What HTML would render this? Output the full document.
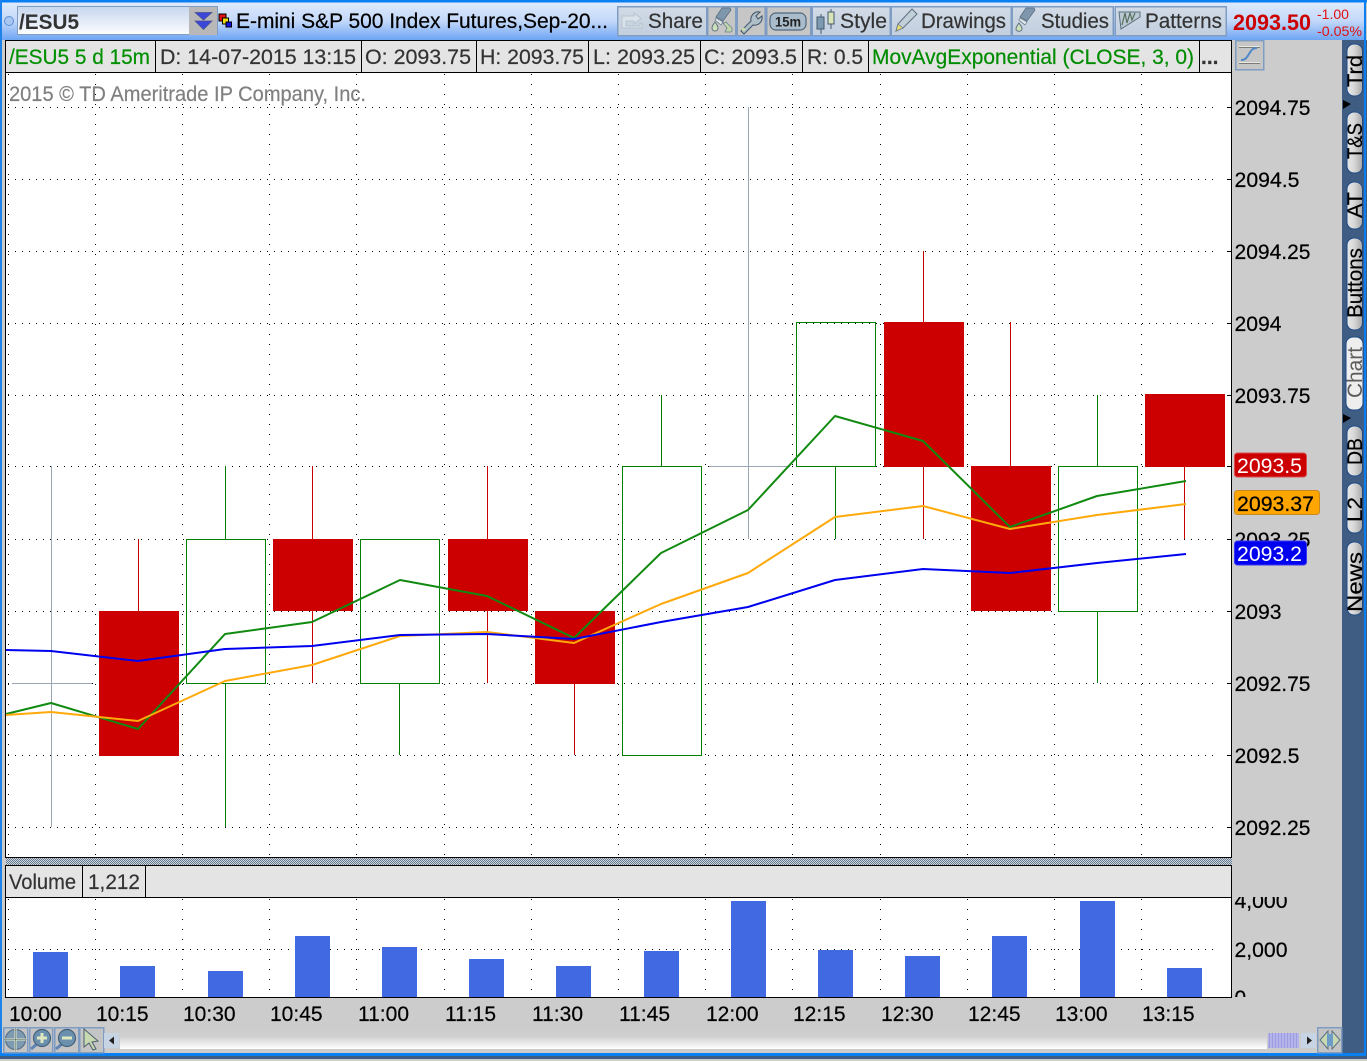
<!DOCTYPE html>
<html>
<head>
<meta charset="utf-8">
<title>/ESU5 Chart</title>
<style>
html,body{margin:0;padding:0;background:#ccc;overflow:hidden}
svg{display:block;position:absolute;left:0;top:0}
text{font-family:"Liberation Sans",sans-serif;font-size:21px;white-space:pre}
.g line{stroke:#000;stroke-width:1;shape-rendering:crispEdges}
.h{stroke-dasharray:1 6}
.v{stroke-dasharray:1 9}
.c{shape-rendering:crispEdges}
.t{fill:#333;stroke:#333;stroke-width:.2}
.ax{fill:#000;stroke:#000;stroke-width:.2}
.btn{stroke:#7f9cc2;stroke-width:1.5;shape-rendering:crispEdges}
.tab{stroke:#1c4a86;stroke-width:1}
</style>
</head>
<body>
<svg width="1367" height="1061" viewBox="0 0 1367 1061" xmlns="http://www.w3.org/2000/svg">
<defs>
<linearGradient id="tb" x1="0" y1="0" x2="0" y2="1"><stop offset="0" stop-color="#dfeafc"/><stop offset=".5" stop-color="#c3d8f9"/><stop offset="1" stop-color="#6fa5f4"/></linearGradient>
<linearGradient id="inp" x1="0" y1="0" x2="0" y2="1"><stop offset="0" stop-color="#c6d6ee"/><stop offset="1" stop-color="#fcfdff"/></linearGradient>
<linearGradient id="bt" x1="0" y1="0" x2="0" y2="1"><stop offset="0" stop-color="#d2dbe6"/><stop offset="1" stop-color="#c2cfdf"/></linearGradient>
<linearGradient id="track" x1="0" y1="0" x2="0" y2="1"><stop offset="0" stop-color="#cccccc"/><stop offset=".35" stop-color="#cfcfcf"/><stop offset="1" stop-color="#ffffff"/></linearGradient>
<linearGradient id="tabg" x1="0" y1="0" x2="1" y2="0"><stop offset="0" stop-color="#e8e8e8"/><stop offset=".45" stop-color="#d8d8d8"/><stop offset="1" stop-color="#a8a8a8"/></linearGradient>
<pattern id="hatch" width="2" height="2" patternUnits="userSpaceOnUse"><rect width="2" height="2" fill="#d4d9de"/><rect width="1" height="1" fill="#5f7890"/><rect x="1" y="1" width="1" height="1" fill="#5f7890"/></pattern>
<pattern id="thumb" width="3" height="3" patternUnits="userSpaceOnUse"><rect width="3" height="3" fill="#b4b4ea"/><rect width="1" height="3" fill="#9c9ce0"/></pattern>
<clipPath id="volaxis"><rect x="1232" y="897" width="110" height="100"/></clipPath>
</defs>

<!-- window -->
<rect width="1367" height="1061" fill="#cccccc"/>
<rect x="0" y="2" width="1365" height="38" fill="url(#tb)"/>
<rect x="0" y="0" width="1367" height="2.5" fill="#0a7ff2"/>
<rect x="0" y="0" width="2" height="1056" fill="#1f82ea"/>
<rect x="1342" y="40" width="25" height="1019" fill="#3f5c83"/>
<rect x="1364" y="2" width="2" height="1053" fill="#0a7ff2"/>
<rect x="0" y="1053" width="1366" height="3" fill="#0a7ff2"/>
<rect x="0" y="1056" width="1366" height="3" fill="#3f5c83"/>

<!-- top toolbar -->
<circle cx="9" cy="21" r="4.5" fill="#a9c6f0" stroke="#5f90d8"/>
<rect x="17.500" y="6.500" width="200" height="28" fill="url(#inp)" stroke="#7f9cc2"/>
<rect x="189" y="7" width="28" height="28" fill="#b8b8b8"/>
<path d="M195 12.500h17l-8.500 7.500zM195 21h17l-8.500 8.500z" fill="#3c46d8" stroke="#47508c" stroke-width=".7"/>
<text x="19" y="29" style="fill:#333;font-weight:bold" textLength="60" lengthAdjust="spacingAndGlyphs">/ESU5</text>
<g class="c"><rect x="219" y="14" width="7" height="7" fill="#e01010" stroke="#000"/><rect x="222.500" y="18" width="6" height="6" fill="#f0e010" stroke="#000"/><rect x="226" y="22" width="5.500" height="5" fill="#1010e0" stroke="#000"/></g>
<text x="236" y="28" fill="#000" stroke="#000" stroke-width=".2" textLength="372" lengthAdjust="spacing">E-mini S&amp;P 500 Index Futures,Sep-20...</text>

<g fill="url(#bt)" class="btn">
<rect x="617.500" y="6.500" width="89" height="29"/>
<rect x="707.500" y="6.500" width="28" height="29" fill="#c6c6c6"/>
<rect x="737" y="6.500" width="28" height="29" fill="#c6c6c6"/>
<rect x="766.500" y="6.500" width="44" height="29" fill="#c6c6c6"/>
<rect x="812" y="6.500" width="78" height="29"/>
<rect x="891" y="6.500" width="120" height="29"/>
<rect x="1012" y="6.500" width="101" height="29"/>
<rect x="1115" y="6.500" width="111" height="29"/>
</g>
<!-- share icon -->
<path d="M622 16h12v-3l7 5.500-7 5.500v-3h-8v5h14v-3h2v5h-20z" fill="#dbe3ea" stroke="#b7c3cf"/>
<text x="648" y="28" class="t" textLength="55" lengthAdjust="spacingAndGlyphs">Share</text>
<!-- style painter icon -->
<path d="M716 17l6-9h8l1 2-8 11z" fill="#7f97ad" stroke="#586c80" stroke-width=".8"/>
<path d="M716 18l7 4-2 3-6-5z" fill="#dfe8e8" stroke="#586c80" stroke-width=".6"/>
<path d="M715 22c-2 3-3 4-3 6 0 4 6 4 6 0 0-2-1-3-3-6z" fill="#cfe0bd" stroke="#5f7480"/>
<path d="M722 22l2 1 2-1 6 6v3l-1 1h-6l2-4z" fill="#bfd4a8" stroke="#6d8292" stroke-width=".8"/>
<!-- wrench -->
<path d="M741 31l10-10c-1-5 3-10 9-9l-4 4 2 3 4-3c1 6-4 10-9 9l-9 9z" fill="#aebfc9" stroke="#44596e" stroke-width="1.100"/>
<circle cx="743.500" cy="29.500" r="1.800" fill="#c8d8a8"/>
<!-- 15m -->
<rect x="770" y="13" width="36" height="17" rx="6" fill="#a8bccb" stroke="#52687c" stroke-width="1.200"/>
<text x="775" y="26.500" style="font-size:14px;font-weight:bold;fill:#222" textLength="26" lengthAdjust="spacingAndGlyphs">15m</text>
<!-- style candles -->
<path d="M821 14v20M831 9v20" stroke="#44596e"/>
<rect x="817" y="17" width="7" height="12" fill="#7d9ab0" stroke="#44596e"/>
<rect x="828" y="12" width="6" height="12" fill="#d9e4b8" stroke="#44596e"/>
<text x="840" y="28" class="t" textLength="47" lengthAdjust="spacingAndGlyphs">Style</text>
<!-- pencil -->
<path d="M896 31l2-7 14-15 5 5-14 14z" fill="#c3cfd8" stroke="#5b6f80"/>
<path d="M896 31l2-7 5 4z" fill="#e8dc70" stroke="#5b6f80" stroke-width=".6"/>
<text x="921" y="28" class="t" textLength="85" lengthAdjust="spacingAndGlyphs">Drawings</text>
<!-- studies -->
<path d="M1020 17l6-9h8l1 2-8 11z" fill="#7f97ad" stroke="#586c80" stroke-width=".8"/>
<path d="M1020 18l7 4-2 3-6-5z" fill="#dfe8e8" stroke="#586c80" stroke-width=".6"/>
<path d="M1019 23c-2 3-3 4-3 6 0 3 6 3 6 0 0-2-1-3-3-6z" fill="#cfe0bd" stroke="#5f7480"/>
<text x="1041" y="28" class="t" textLength="68" lengthAdjust="spacingAndGlyphs">Studies</text>
<!-- patterns -->
<path d="M1119 12h21v5l-19 12z" fill="#bcc8d2" stroke="#5a6f80"/>
<path d="M1122 25l3-12 2 10 3-10 2 7 3-7" fill="none" stroke="#55705f" stroke-width="1.200"/>
<text x="1145" y="28" class="t" textLength="77" lengthAdjust="spacingAndGlyphs">Patterns</text>

<text x="1233" y="30" style="font-weight:bold;fill:#cc0000;font-size:22px" textLength="78" lengthAdjust="spacingAndGlyphs">2093.50</text>
<text x="1317" y="19" style="fill:#e01010;font-size:14px" textLength="32" lengthAdjust="spacingAndGlyphs">-1.00</text>
<text x="1317" y="36" style="fill:#e01010;font-size:14px" textLength="45" lengthAdjust="spacingAndGlyphs">-0.05%</text>

<!-- header row -->
<rect x="5" y="40" width="1227" height="32" fill="#e4e4e4"/>
<g class="c" stroke="#000" stroke-width="1">
<path d="M5 40.500H1232M5 72.500H1232M5.500 40V858M1231.500 40V998M155.500 41V72M361.500 41V72M476.500 41V72M588.500 41V72M700.500 41V72M802.500 41V72M868.500 41V72M1199.500 41V72" fill="none"/>
</g>
<text x="9" y="64" style="fill:#009000;stroke:#009000;stroke-width:.2" textLength="141" lengthAdjust="spacingAndGlyphs">/ESU5 5 d 15m</text>
<text x="160" y="64" class="t" textLength="196" lengthAdjust="spacingAndGlyphs">D: 14-07-2015 13:15</text>
<text x="365" y="64" class="t" textLength="106" lengthAdjust="spacingAndGlyphs">O: 2093.75</text>
<text x="480" y="64" class="t" textLength="104" lengthAdjust="spacingAndGlyphs">H: 2093.75</text>
<text x="593" y="64" class="t" textLength="102" lengthAdjust="spacingAndGlyphs">L: 2093.25</text>
<text x="704" y="64" class="t" textLength="93" lengthAdjust="spacingAndGlyphs">C: 2093.5</text>
<text x="807" y="64" class="t" textLength="56" lengthAdjust="spacingAndGlyphs">R: 0.5</text>
<text x="872" y="64" style="fill:#008c00;stroke:#008c00;stroke-width:.2" textLength="322" lengthAdjust="spacingAndGlyphs">MovAvgExponential (CLOSE, 3, 0)</text>
<text x="1201" y="64" class="t" style="font-weight:bold">...</text>

<!-- axis button -->
<rect x="1235.500" y="40.500" width="28" height="29" fill="#c6c6c6" class="btn"/>
<path d="M1239 47h21M1239 63h21" stroke="#e8e8e0" stroke-width="2"/>
<path d="M1239 47.500h21M1239 63.500h21" stroke="#555" stroke-width=".7"/>
<path d="M1241 60c5 0 6-3 8-6s3-6 8-6" fill="none" stroke="#4f88c8" stroke-width="2"/>

<!-- main chart -->
<rect x="6" y="73" width="1225" height="784" fill="#ffffff"/>
<g class="g">
<line class="h" x1="8" x2="1218" y1="107.500" y2="107.500"/>
<line class="h" x1="8" x2="1218" y1="179.500" y2="179.500"/>
<line class="h" x1="8" x2="1218" y1="251.500" y2="251.500"/>
<line class="h" x1="8" x2="1218" y1="323.500" y2="323.500"/>
<line class="h" x1="8" x2="1218" y1="395.500" y2="395.500"/>
<line class="h" x1="8" x2="1218" y1="466.500" y2="466.500"/>
<line class="h" x1="8" x2="1218" y1="539.500" y2="539.500"/>
<line class="h" x1="8" x2="1218" y1="611.500" y2="611.500"/>
<line class="h" x1="8" x2="1218" y1="683.500" y2="683.500"/>
<line class="h" x1="8" x2="1218" y1="755.500" y2="755.500"/>
<line class="h" x1="8" x2="1218" y1="827.500" y2="827.500"/>
<line class="v" x1="8.500" x2="8.500" y1="74" y2="857"/>
<line class="v" x1="95.500" x2="95.500" y1="74" y2="857"/>
<line class="v" x1="182.500" x2="182.500" y1="74" y2="857"/>
<line class="v" x1="269.500" x2="269.500" y1="74" y2="857"/>
<line class="v" x1="356.500" x2="356.500" y1="74" y2="857"/>
<line class="v" x1="444.500" x2="444.500" y1="74" y2="857"/>
<line class="v" x1="531.500" x2="531.500" y1="74" y2="857"/>
<line class="v" x1="618.500" x2="618.500" y1="74" y2="857"/>
<line class="v" x1="705.500" x2="705.500" y1="74" y2="857"/>
<line class="v" x1="792.500" x2="792.500" y1="74" y2="857"/>
<line class="v" x1="880.500" x2="880.500" y1="74" y2="857"/>
<line class="v" x1="967.500" x2="967.500" y1="74" y2="857"/>
<line class="v" x1="1054.500" x2="1054.500" y1="74" y2="857"/>
<line class="v" x1="1141.500" x2="1141.500" y1="74" y2="857"/>
</g>
<text x="9" y="101" style="fill:#808080;stroke:#808080;stroke-width:.2" textLength="357" lengthAdjust="spacingAndGlyphs">2015 © TD Ameritrade IP Company, Inc.</text>

<!-- candles -->
<g class="c" fill="none" stroke-width="1">
<path d="M51.500 466V827M12 683.500H92M748.500 107V539M709 466.500H790" stroke="#9aa6b4"/>
<path d="M138.500 539V611M312.500 466V539M312.500 611V683M487.500 466V539M487.500 611V683M574.500 684V755M923.500 251V322M923.500 466V539M1010.500 322V466M1184.500 466V539" stroke="#c80000"/>
<path d="M225.500 466V539M225.500 683V827M399.500 683V755M661.500 395V466M835.500 466V539M1097.500 395V466M1097.500 611V683" stroke="#007a00"/>
</g>
<g class="c" fill="#cc0000">
<rect x="99" y="611" width="80" height="145"/>
<rect x="273" y="539" width="80" height="72"/>
<rect x="448" y="539" width="80" height="72"/>
<rect x="535" y="611" width="80" height="73"/>
<rect x="884" y="322" width="80" height="145"/>
<rect x="971" y="466" width="80" height="145"/>
<rect x="1145" y="394" width="80" height="73"/>
</g>
<g class="c" fill="none" stroke="#007f00" stroke-width="1">
<rect x="186.500" y="539.500" width="79" height="144"/>
<rect x="360.500" y="539.500" width="79" height="144"/>
<rect x="622.500" y="466.500" width="79" height="289"/>
<rect x="796.500" y="322.500" width="79" height="144"/>
<rect x="1058.500" y="466.500" width="79" height="145"/>
</g>
<g fill="none" stroke-width="2" stroke-linejoin="round">
<polyline stroke="#108a10" points="6,714 51,703 138,729 225,634 312,622 400,580 487,596 574,638 661,553 748,510 835,416 923,441 1010,527 1097,496 1186,481"/>
<polyline stroke="#ffa90a" points="6,715 51,712 138,721 225,681 312,665 400,636 487,632 574,643 661,604 748,573 835,517 923,506 1010,529 1097,515 1186,504"/>
<polyline stroke="#0000f0" points="6,650 51,651 138,661 225,649 312,646 400,635 487,634 574,639 661,622 748,607 835,580 923,569 1010,573 1097,563 1186,554"/>
</g>

<!-- axis ticks and labels -->
<path class="c" d="M1227 107.500h5M1227 179.500h5M1227 251.500h5M1227 323.500h5M1227 395.500h5M1227 466.500h5M1227 539.500h5M1227 611.500h5M1227 683.500h5M1227 755.500h5M1227 827.500h5M1227 949.500h5" stroke="#000"/>
<g>
<text x="1234.500" y="115" class="ax" textLength="76" lengthAdjust="spacingAndGlyphs">2094.75</text>
<text x="1234.500" y="187" class="ax" textLength="65" lengthAdjust="spacingAndGlyphs">2094.5</text>
<text x="1234.500" y="259" class="ax" textLength="76" lengthAdjust="spacingAndGlyphs">2094.25</text>
<text x="1234.500" y="331" class="ax" textLength="47" lengthAdjust="spacingAndGlyphs">2094</text>
<text x="1234.500" y="403" class="ax" textLength="76" lengthAdjust="spacingAndGlyphs">2093.75</text>
<text x="1234.500" y="547" class="ax" textLength="76" lengthAdjust="spacingAndGlyphs">2093.25</text>
<text x="1234.500" y="619" class="ax" textLength="47" lengthAdjust="spacingAndGlyphs">2093</text>
<text x="1234.500" y="691" class="ax" textLength="76" lengthAdjust="spacingAndGlyphs">2092.75</text>
<text x="1234.500" y="763" class="ax" textLength="65" lengthAdjust="spacingAndGlyphs">2092.5</text>
<text x="1234.500" y="835" class="ax" textLength="76" lengthAdjust="spacingAndGlyphs">2092.25</text>
</g>
<rect x="1234.500" y="453" width="72" height="24" rx="3" fill="#cc0000" stroke="#d85050"/>
<text x="1237" y="473" style="fill:#fff" textLength="65" lengthAdjust="spacingAndGlyphs">2093.5</text>
<rect x="1234.500" y="490.500" width="85" height="24" rx="3" fill="#ffa500" stroke="#c88a20"/>
<text x="1237" y="511" class="ax" textLength="77" lengthAdjust="spacingAndGlyphs">2093.37</text>
<rect x="1234.500" y="541" width="72" height="24" rx="3" fill="#0000f0" stroke="#3838f0"/>
<text x="1237" y="561" style="fill:#fff" textLength="65" lengthAdjust="spacingAndGlyphs">2093.2</text>

<!-- volume panel -->
<rect x="6" y="858" width="1226" height="7" fill="url(#hatch)"/>
<rect x="6" y="866" width="1225" height="31" fill="#e4e4e4"/>
<rect x="6" y="898" width="1225" height="99" fill="#ffffff"/>
<path class="c" d="M5 857.500H1232M5 865.500H1232M5 897.500H1232M5 997.500H1232M5.500 865V998M82.500 866V897M145.500 866V897" stroke="#000" fill="none"/>
<text x="9" y="889" class="t" textLength="67" lengthAdjust="spacingAndGlyphs">Volume</text>
<text x="88" y="889" class="t" textLength="52" lengthAdjust="spacingAndGlyphs">1,212</text>
<g class="g">
<line class="h" x1="8" x2="1218" y1="949.500" y2="949.500"/>
<line class="v" x1="8.500" x2="8.500" y1="899" y2="997"/>
<line class="v" x1="95.500" x2="95.500" y1="899" y2="997"/>
<line class="v" x1="182.500" x2="182.500" y1="899" y2="997"/>
<line class="v" x1="269.500" x2="269.500" y1="899" y2="997"/>
<line class="v" x1="356.500" x2="356.500" y1="899" y2="997"/>
<line class="v" x1="444.500" x2="444.500" y1="899" y2="997"/>
<line class="v" x1="531.500" x2="531.500" y1="899" y2="997"/>
<line class="v" x1="618.500" x2="618.500" y1="899" y2="997"/>
<line class="v" x1="705.500" x2="705.500" y1="899" y2="997"/>
<line class="v" x1="792.500" x2="792.500" y1="899" y2="997"/>
<line class="v" x1="880.500" x2="880.500" y1="899" y2="997"/>
<line class="v" x1="967.500" x2="967.500" y1="899" y2="997"/>
<line class="v" x1="1054.500" x2="1054.500" y1="899" y2="997"/>
<line class="v" x1="1141.500" x2="1141.500" y1="899" y2="997"/>
</g>
<g class="c" fill="#4169e1">
<rect x="33" y="952" width="35" height="45"/>
<rect x="120" y="966" width="35" height="31"/>
<rect x="208" y="971" width="35" height="26"/>
<rect x="295" y="936" width="35" height="61"/>
<rect x="382" y="947" width="35" height="50"/>
<rect x="469" y="959" width="35" height="38"/>
<rect x="556" y="966" width="35" height="31"/>
<rect x="644" y="951" width="35" height="46"/>
<rect x="731" y="901" width="35" height="96"/>
<rect x="818" y="950" width="35" height="47"/>
<rect x="905" y="956" width="35" height="41"/>
<rect x="992" y="936" width="35" height="61"/>
<rect x="1080" y="901" width="35" height="96"/>
<rect x="1167" y="968" width="35" height="29"/>
</g>
<g clip-path="url(#volaxis)">
<text x="1234.500" y="908" class="ax" textLength="53" lengthAdjust="spacingAndGlyphs">4,000</text>
<text x="1234.500" y="957" class="ax" textLength="53" lengthAdjust="spacingAndGlyphs">2,000</text>
<text x="1234.500" y="1005" class="ax">0</text>
</g>

<!-- time axis -->
<g>
<text x="9" y="1021" class="ax">10:00</text>
<text x="96" y="1021" class="ax">10:15</text>
<text x="183" y="1021" class="ax">10:30</text>
<text x="270" y="1021" class="ax">10:45</text>
<text x="358" y="1021" class="ax">11:00</text>
<text x="445" y="1021" class="ax">11:15</text>
<text x="532" y="1021" class="ax">11:30</text>
<text x="619" y="1021" class="ax">11:45</text>
<text x="706" y="1021" class="ax">12:00</text>
<text x="793" y="1021" class="ax">12:15</text>
<text x="881" y="1021" class="ax">12:30</text>
<text x="968" y="1021" class="ax">12:45</text>
<text x="1055" y="1021" class="ax">13:00</text>
<text x="1142" y="1021" class="ax">13:15</text>
</g>

<!-- bottom controls -->
<g fill="#c4c4c4" class="btn">
<rect x="3.500" y="1027.500" width="24" height="25"/>
<rect x="29.500" y="1027.500" width="23" height="25"/>
<rect x="54.500" y="1027.500" width="24" height="25"/>
<rect x="79.500" y="1027.500" width="24" height="25"/>
</g>
<circle cx="15.500" cy="1039.500" r="10" fill="#7e9ab2" stroke="#5a7288" stroke-width="1.200"/>
<path d="M15.500 1028v23M4.500 1039.500h22" stroke="#dfe8c8" stroke-width="2"/>
<path d="M15.500 1028v23M4.500 1039.500h22" stroke="#46545e" stroke-width=".5"/>
<path d="M31 1049l6-5" stroke="#5f84b8" stroke-width="3"/>
<circle cx="42" cy="1038" r="8.500" fill="#6a90ae" stroke="#46607a" stroke-width="1.200"/>
<path d="M42 1033v10M37 1038h10" stroke="#dfe8c0" stroke-width="3"/>
<path d="M56 1049l6-5" stroke="#5f84b8" stroke-width="3"/>
<circle cx="67" cy="1038" r="8.500" fill="#6a90ae" stroke="#46607a" stroke-width="1.200"/>
<path d="M62 1038h10" stroke="#dfe8c0" stroke-width="3"/>
<path d="M84 1029l14 12-6 1 4 7-3 1-4-7-5 4z" fill="#c8d8b0" stroke="#4a6070"/>
<rect x="104" y="1033" width="15" height="15" fill="#c7d4e4"/>
<path d="M109 1040.500l5-4v8z" fill="#222"/>
<rect x="120" y="1029" width="1147" height="20" fill="url(#track)"/>
<rect x="1268" y="1033" width="31" height="15" fill="url(#thumb)"/>
<rect x="1301" y="1033" width="15" height="15" fill="#c7d4e4"/>
<path d="M1312 1040.500l-5-4v8z" fill="#222"/>
<rect x="1317.500" y="1027.500" width="24" height="25" fill="#c4c4c4" class="btn"/>
<path d="M1320 1040l8-9v18zM1340 1040l-8-9v18z" fill="#c8d8b0" stroke="#5a7288"/>
<rect x="1327" y="1034" width="6" height="12" fill="#6c9cc8"/>

<!-- side tabs -->
<g fill="url(#tabg)" class="tab">
<rect x="1347" y="44" width="15.500" height="52" rx="7"/>
<rect x="1347" y="112" width="15.500" height="61" rx="7"/>
<rect x="1347" y="182" width="15.500" height="47" rx="7"/>
<rect x="1347" y="238" width="15.500" height="92" rx="7"/>
<rect x="1347" y="426" width="15.500" height="50" rx="7"/>
<rect x="1347" y="483" width="15.500" height="50" rx="7"/>
<rect x="1347" y="542" width="15.500" height="73" rx="7"/>
</g>
<rect x="1346" y="337" width="17" height="73" rx="7" fill="#eeeeee" stroke="#1c4a86"/>
<path d="M1343 100l8 4-8 5zM1343 414l8 4-8 5z" fill="#000"/>
<g>
<text transform="translate(1362,87) rotate(-90)" class="ax" textLength="32" lengthAdjust="spacingAndGlyphs">Trd</text>
<text transform="translate(1362,159) rotate(-90)" class="ax" textLength="36" lengthAdjust="spacingAndGlyphs">T&amp;S</text>
<text transform="translate(1362,218) rotate(-90)" class="ax" textLength="26" lengthAdjust="spacingAndGlyphs">AT</text>
<text transform="translate(1362,318) rotate(-90)" class="ax" textLength="70" lengthAdjust="spacingAndGlyphs">Buttons</text>
<text transform="translate(1362,398) rotate(-90)" style="fill:#5c5c5c" textLength="51" lengthAdjust="spacingAndGlyphs">Chart</text>
<text transform="translate(1362,465) rotate(-90)" class="ax" textLength="27" lengthAdjust="spacingAndGlyphs">DB</text>
<text transform="translate(1362,522) rotate(-90)" class="ax" textLength="25" lengthAdjust="spacingAndGlyphs">L2</text>
<text transform="translate(1362,612) rotate(-90)" class="ax" textLength="60" lengthAdjust="spacingAndGlyphs">News</text>
</g>
</svg>
</body>
</html>
